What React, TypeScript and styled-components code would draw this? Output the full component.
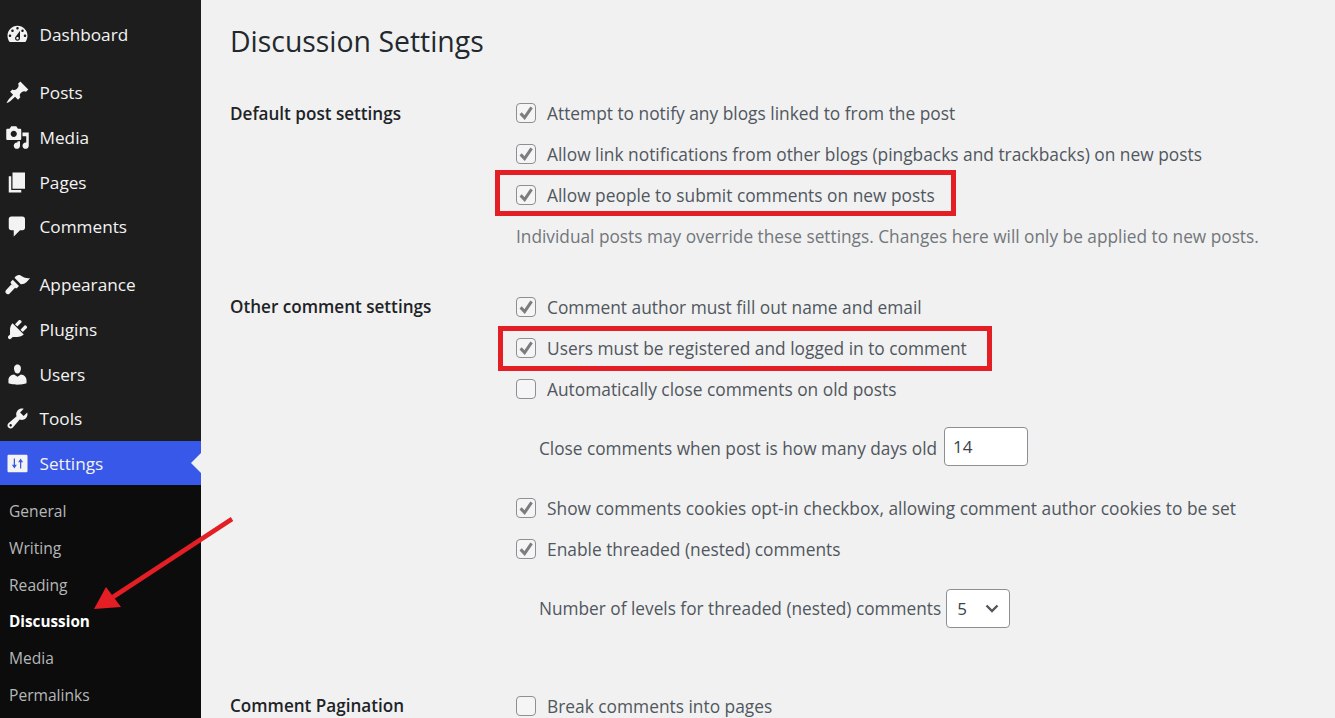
import React from "react";
import styled, { createGlobalStyle } from "styled-components";

const FONT = `"Open Sans", "Noto Sans", "Liberation Sans", sans-serif`;

const Global = createGlobalStyle`
  html, body { margin: 0; padding: 0; background: #f0f0f1; }
  body { font-family: ${FONT}; overflow: hidden; }
`;

const Page = styled.div`
  position: relative;
  display: flex;
  width: 1335px;
  height: 718px;
  overflow: hidden;
  background: #f1f1f1;
`;

const Sidebar = styled.nav`
  width: 201px;
  flex: none;
  display: flex;
  flex-direction: column;
  background: #1d1d1d;
  padding-top: 12.5px;
`;

const MenuGroup = styled.div<{ $last?: boolean }>`
  display: flex;
  flex-direction: column;
  flex: none;
  margin-bottom: ${(p) => (p.$last ? 0 : 13.3)}px;
`;

const MenuItem = styled.div<{ $active?: boolean }>`
  position: relative;
  flex: none;
  height: ${(p) => (p.$active ? 43.9 : 44.7)}px;
  display: flex;
  align-items: center;
  gap: 10px;
  padding-left: 4.5px;
  color: #f3f3f3;
  font-size: 17.2px;
  background: ${(p) => (p.$active ? "#3858e9" : "transparent")};
  svg { width: 25px; height: 25px; fill: #f3f3f3; flex: none; }
`;

const ActiveNotch = styled.span`
  position: absolute;
  right: 0;
  top: 50%;
  margin-top: -10px;
  border: 10px solid transparent;
  border-left-width: 0;
  border-right-color: #f1f1f1;
`;

const Submenu = styled.div`
  flex: 1;
  display: flex;
  flex-direction: column;
  background: #0c0c0c;
  padding-top: 7.5px;
`;

const SubItem = styled.div<{ $current?: boolean }>`
  height: 36.8px;
  flex: none;
  display: flex;
  align-items: center;
  padding-left: 9px;
  font-size: ${(p) => (p.$current ? 15.3 : 15.6)}px;
  color: ${(p) => (p.$current ? "#ffffff" : "#b6b7b8")};
  font-weight: ${(p) => (p.$current ? 700 : 400)};
`;

const Main = styled.main`
  flex: 1;
  padding-left: 29px;
  display: flex;
  flex-direction: column;
`;

const Title = styled.h1`
  margin: 0;
  flex: none;
  height: 92.5px;
  box-sizing: border-box;
  padding-top: 20px;
  font-size: 28.4px;
  line-height: 42px;
  font-weight: 400;
  color: #23282d;
`;

const Section = styled.section<{ $gap?: number }>`
  display: flex;
  flex: none;
  margin-bottom: ${(p) => p.$gap ?? 0}px;
`;

const SectionLabel = styled.div`
  width: 286px;
  flex: none;
  height: 41px;
  display: flex;
  align-items: center;
  font-size: 17.1px;
  font-weight: 600;
  color: #1d2327;
`;

const Fields = styled.div`
  display: flex;
  flex-direction: column;
`;

const CheckRow = styled.label`
  height: 41px;
  flex: none;
  display: flex;
  align-items: center;
  gap: 11px;
  font-size: 17.35px;
  color: #50575e;
  white-space: nowrap;
`;

const Box = styled.span`
  width: 20px;
  height: 20px;
  box-sizing: border-box;
  flex: none;
  border: 1px solid #8c8f94;
  border-radius: 4px;
  background: #f5f5f5;
  display: flex;
  align-items: center;
  justify-content: center;
  svg { width: 20px; height: 20px; flex: none; fill: none; stroke: #7d7d7d; stroke-width: 3; }
`;

const Description = styled.div`
  height: 41px;
  flex: none;
  display: flex;
  align-items: center;
  font-size: 17.28px;
  color: #72777c;
  white-space: nowrap;
`;

const InlineRow = styled.div<{ $gap: number }>`
  height: 78px;
  flex: none;
  padding-left: 23px;
  display: flex;
  align-items: center;
  gap: ${(p) => p.$gap}px;
  font-size: 17.25px;
  color: #50575e;
  white-space: nowrap;
`;

const NumberInput = styled.input`
  width: 84px;
  height: 39px;
  margin-bottom: 4px;
  box-sizing: border-box;
  border: 1px solid #8c8f94;
  border-radius: 4px;
  background: #fff;
  padding: 0 8px;
  font: 400 17px ${FONT};
  color: #3c434a;
  outline: none;
`;

const SelectBox = styled.div`
  width: 64px;
  height: 39px;
  box-sizing: border-box;
  border: 1px solid #8c8f94;
  border-radius: 4px;
  background: #fff;
  padding: 0 9px 0 10px;
  display: flex;
  align-items: center;
  justify-content: space-between;
  font-size: 17px;
  color: #3c434a;
  svg { width: 16px; height: 16px; stroke: #50575e; stroke-width: 2.4; fill: none; }
`;

const Annotation = styled.div<{ $x: number; $y: number; $w: number; $h: number }>`
  position: absolute;
  left: ${(p) => p.$x}px;
  top: ${(p) => p.$y}px;
  width: ${(p) => p.$w}px;
  height: ${(p) => p.$h}px;
  box-sizing: border-box;
  border: 5px solid #e31e24;
`;

const ArrowLayer = styled.svg`
  position: absolute;
  left: 0;
  top: 0;
  width: 1335px;
  height: 718px;
  pointer-events: none;
`;

const icons: Record<string, string> = {
  dashboard: "M3.76 16h12.48c1.1-1.37 1.76-3.11 1.76-5 0-4.42-3.58-8-8-8s-8 3.58-8 8c0 1.89.66 3.63 1.76 5zM10 4c.55 0 1 .45 1 1s-.45 1-1 1-1-.45-1-1 .45-1 1-1zM6 6c.55 0 1 .45 1 1s-.45 1-1 1-1-.45-1-1 .45-1 1-1zm8 0c.55 0 1 .45 1 1s-.45 1-1 1-1-.45-1-1 .45-1 1-1zm-5.37 5.55L12 7v6c0 1.1-.9 2-2 2s-2-.9-2-2c0-.57.24-1.08.63-1.45zM4 10c.55 0 1 .45 1 1s-.45 1-1 1-1-.45-1-1 .45-1 1-1zm12 0c.55 0 1 .45 1 1s-.45 1-1 1-1-.45-1-1 .45-1 1-1zm-5 3c0-.55-.45-1-1-1s-1 .45-1 1 .45 1 1 1 1-.45 1-1z",
  post: "M10.44 3.02l1.82-1.82 6.36 6.35-1.83 1.82c-1.05-.68-2.48-.57-3.41.36l-.75.75c-.92.93-1.04 2.35-.35 3.41l-1.83 1.82-2.41-2.41-2.8 2.79c-.42.42-3.38 2.71-3.8 2.29s1.86-3.39 2.28-3.81l2.79-2.79L4.1 9.36l1.83-1.82c1.05.69 2.48.57 3.4-.36l.75-.75c.93-.92 1.05-2.35.36-3.41z",
  media: "M13 11V4c0-.55-.45-1-1-1h-1.67L9 1H5L3.67 3H2c-.55 0-1 .45-1 1v7c0 .55.45 1 1 1h10c.55 0 1-.45 1-1zM7 4.5c1.38 0 2.5 1.12 2.5 2.5S8.38 9.5 7 9.5 4.5 8.38 4.5 7 5.62 4.5 7 4.5zM14 6h5v10.5c0 1.38-1.12 2.5-2.5 2.5S14 17.88 14 16.5s1.12-2.5 2.5-2.5c.17 0 .34.02.5.05V9h-3V6zm-4 8.05V13h2v3.5c0 1.38-1.12 2.5-2.5 2.5S7 17.88 7 16.5 8.12 14 9.5 14c.17 0 .34.02.5.05z",
  page: "M6 15V2h10v13H6zm-1 1h8v2H3V5h2v11z",
  comments: "M5 2h9c1.1 0 2 .9 2 2v7c0 1.1-.9 2-2 2h-2l-5 5v-5H5c-1.1 0-2-.9-2-2V4c0-1.1.9-2 2-2z",
  appearance: "M7.6 4.6C9 2.6 11 2 12.5 2.8 14.5 4 17 5.5 20 5c-2 2-3.500 5-7.400 4.800zM6.200 6.200l5 5-1.800 1.800-.900-.100-3.900-3.900-.100-1zM5.200 9.700l2.900 2.900-4.600 4.700c-.8.700-2 .5-2.700-.3-.7-.8-.6-1.900.1-2.600z",
  plugins: "M13.11 4.36L9.87 7.6 8 5.73l3.24-3.24c.35-.34 1.05-.2 1.56.32.52.51.66 1.21.31 1.55zm-8 1.77l.91-1.12 9.01 9.01-1.19.84c-.71.71-2.63 1.16-3.82 1.16H6.14L4.9 17.26c-.59.59-1.54.59-2.12 0-.59-.58-.59-1.53 0-2.12l1.24-1.24v-3.88c0-1.13.4-3.19 1.09-3.89zm7.26 3.97l3.24-3.24c.34-.35 1.04-.21 1.55.31.52.51.66 1.21.31 1.55l-3.24 3.25z",
  users: "M10 9.25c-2.27 0-2.73-3.44-2.73-3.44C7 4.02 7.82 2 9.97 2c2.16 0 2.98 2.02 2.71 3.81 0 0-.41 3.44-2.68 3.44zm0 2.57L12.72 10c2.39 0 4.52 2.33 4.52 4.53v2.49s-3.65 1.13-7.24 1.13c-3.65 0-7.24-1.13-7.24-1.13v-2.49c0-2.25 1.94-4.48 4.47-4.48z",
  tools: "M16.68 9.77c-1.34 1.34-3.3 1.67-4.95.99l-5.41 6.52c-.99.99-2.59.99-3.58 0s-.99-2.59 0-3.57l6.52-5.42c-.68-1.65-.35-3.61.99-4.95 1.28-1.28 3.12-1.62 4.72-1.06l-2.89 2.89 2.82 2.82 2.86-2.87c.53 1.58.18 3.39-1.08 4.65zM3.81 16.21c.4.39 1.04.39 1.43 0 .4-.4.4-1.04 0-1.43-.39-.4-1.03-.4-1.43 0-.39.39-.39 1.03 0 1.43z",
  settings: "M18 16V4c0-.55-.45-1-1-1H3c-.55 0-1 .45-1 1v12c0 .55.45 1 1 1h14c.55 0 1-.45 1-1zM7 6h1v5h1.5L7.500 14l-2-3H7V6zm5.500 0l2 3H13v5h-1V9h-1.500l2-3z",
};

const Icon = ({ name }: { name: string }) => (
  <svg viewBox="0 0 20 20" aria-hidden="true">
    <path d={icons[name]} fillRule="evenodd" />
  </svg>
);

const Check = ({ checked = true, children }: { checked?: boolean; children: React.ReactNode }) => (
  <CheckRow>
    <Box>
      {checked && (
        <svg viewBox="0 0 20 20" aria-hidden="true">
          <path d="M4.6 10.4 8.6 14.6 15.6 4.4" />
        </svg>
      )}
    </Box>
    {children}
  </CheckRow>
);

const groups: [string, string][][] = [
  [["dashboard", "Dashboard"]],
  [["post", "Posts"], ["media", "Media"], ["page", "Pages"], ["comments", "Comments"]],
  [["appearance", "Appearance"], ["plugins", "Plugins"], ["users", "Users"], ["tools", "Tools"]],
];

const subItems = ["General", "Writing", "Reading", "Discussion", "Media", "Permalinks"];

export default function App() {
  return (
    <Page>
      <Global />
      <Sidebar>
        {groups.map((g, i) => (
          <MenuGroup key={i} $last={i === 2}>
            {g.map(([icon, label]) => (
              <MenuItem key={label}>
                <Icon name={icon} />
                {label}
              </MenuItem>
            ))}
          </MenuGroup>
        ))}
        <MenuItem $active>
          <Icon name="settings" />
          Settings
          <ActiveNotch />
        </MenuItem>
        <Submenu>
          {subItems.map((s) => (
            <SubItem key={s} $current={s === "Discussion"}>
              {s}
            </SubItem>
          ))}
        </Submenu>
      </Sidebar>
      <Main>
        <Title>Discussion Settings</Title>
        <Section $gap={29.5}>
          <SectionLabel>Default post settings</SectionLabel>
          <Fields>
            <Check>Attempt to notify any blogs linked to from the post</Check>
            <Check>Allow link notifications from other blogs (pingbacks and trackbacks) on new posts</Check>
            <Check>Allow people to submit comments on new posts</Check>
            <Description>Individual posts may override these settings. Changes here will only be applied to new posts.</Description>
          </Fields>
        </Section>
        <Section $gap={38}>
          <SectionLabel>Other comment settings</SectionLabel>
          <Fields>
            <Check>Comment author must fill out name and email</Check>
            <Check>Users must be registered and logged in to comment</Check>
            <Check checked={false}>Automatically close comments on old posts</Check>
            <InlineRow $gap={7}>
              Close comments when post is how many days old
              <NumberInput defaultValue="14" />
            </InlineRow>
            <Check>Show comments cookies opt-in checkbox, allowing comment author cookies to be set</Check>
            <Check>Enable threaded (nested) comments</Check>
            <InlineRow $gap={5}>
              Number of levels for threaded (nested) comments
              <SelectBox>
                5
                <svg viewBox="0 0 16 16" aria-hidden="true">
                  <path d="M2.5 5.5 8 11l5.5-5.5" />
                </svg>
              </SelectBox>
            </InlineRow>
          </Fields>
        </Section>
        <Section>
          <SectionLabel>Comment Pagination</SectionLabel>
          <Fields>
            <Check checked={false}>Break comments into pages</Check>
          </Fields>
        </Section>
      </Main>
      <Annotation $x={495} $y={170} $w={461} $h={46} />
      <Annotation $x={498} $y={326} $w={494} $h={45} />
      <ArrowLayer viewBox="0 0 1335 718" aria-hidden="true">
        <path d="M232 519 113 597" stroke="#e31e24" strokeWidth="4.5" fill="none" />
        <path d="M94 609 106 587 121 607z" fill="#e31e24" />
      </ArrowLayer>
    </Page>
  );
}
